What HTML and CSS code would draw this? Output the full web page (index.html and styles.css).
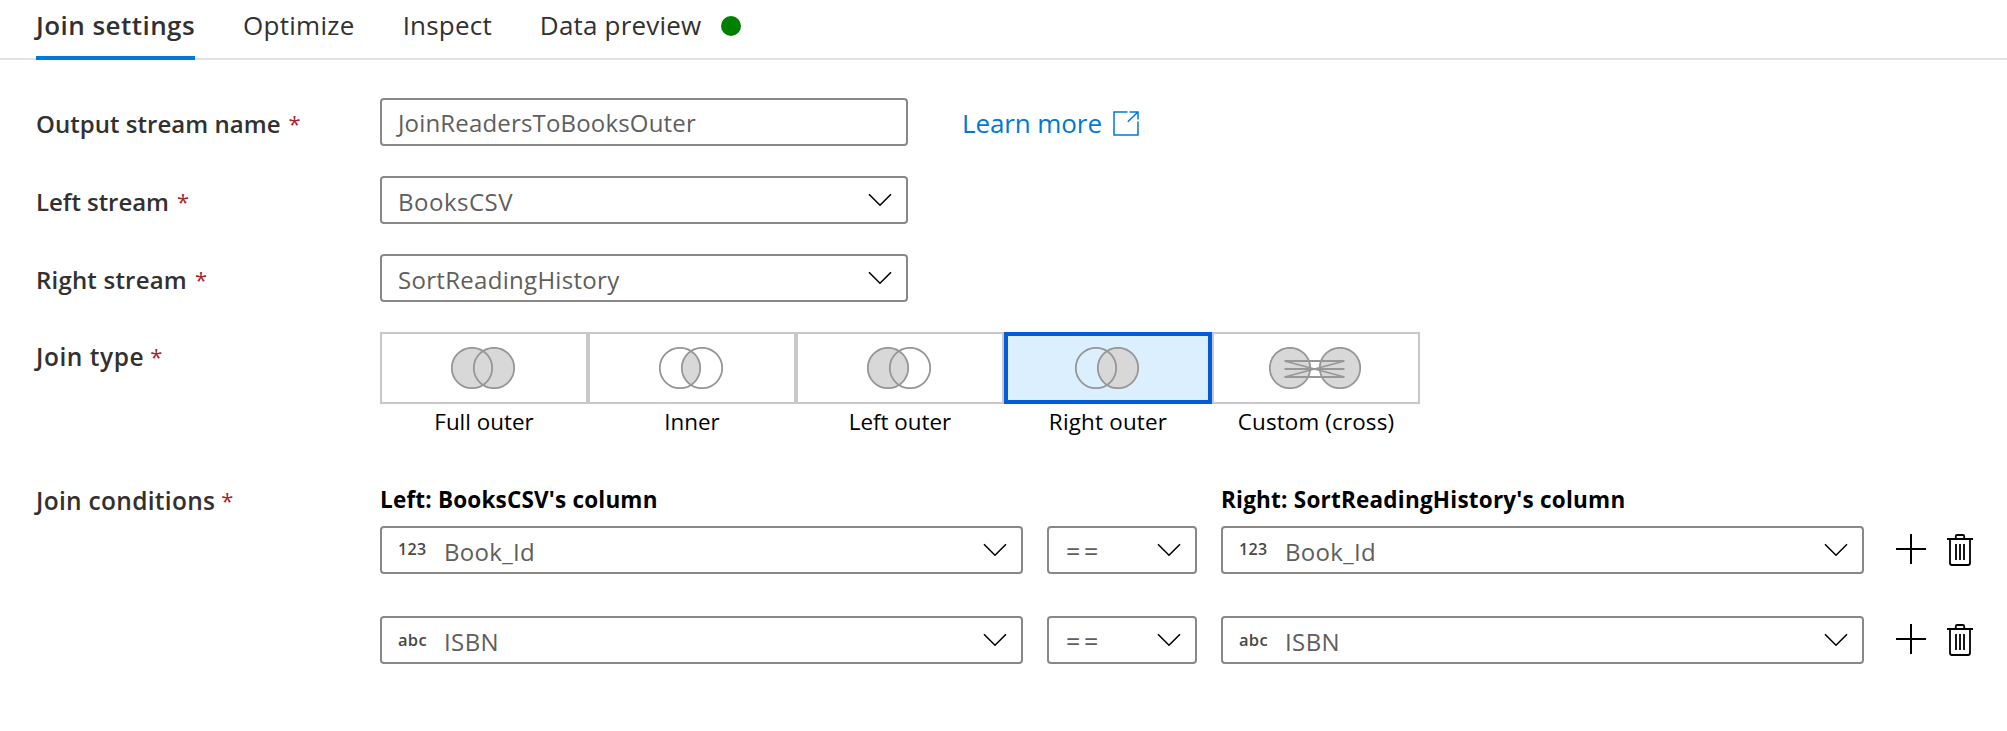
FILE: index.html
```html
<!DOCTYPE html>
<html lang="en">
<head>
<meta charset="utf-8">
<title>Join settings</title>
<link rel="stylesheet" href="styles.css">
</head>
<body>
<svg class="defs" width="0" height="0">
  <symbol id="chevron" viewBox="0 0 24 14"><path d="M1 1.2 12 12.2 23 1.2" fill="none" stroke="#000" stroke-width="1.6"/></symbol>
  <symbol id="plus" viewBox="0 0 30 30"><path d="M0 15H30M15 0V30" fill="none" stroke="#000" stroke-width="2"/></symbol>
  <symbol id="trash" viewBox="0 0 26 32"><path d="M0 5H26M3 5V29Q3 31 5 31H21Q23 31 23 29V5M8.800 5V2.200Q8.800 1 10 1H16Q17.200 1 17.200 2.200V5M9 10V26M13 10V26M17 10V26" fill="none" stroke="#000" stroke-width="1.8"/></symbol>
</svg>
<nav class="tabs">
  <a class="tab tab-active"><span class="t-join">Join settings</span></a>
  <a class="tab"><span class="t-opt">Optimize</span></a>
  <a class="tab"><span class="t-ins">Inspect</span></a>
  <a class="tab"><span class="t-data">Data preview</span><i class="status-dot"></i></a>
</nav>
<main class="form">
  <div class="row">
    <label class="label"><span class="l-out">Output stream name</span><b class="req">*</b></label>
    <div class="field field-input"><span class="value v-out">JoinReadersToBooksOuter</span></div>
    <a class="learn"><span class="learn-text">Learn more</span>
      <svg width="26" height="26" viewBox="0 0 26 26" fill="none" stroke="#0078d4" stroke-width="1.5"><path d="M14.500 1H1V24H25V10.500M16.500 1H25V8.500M25 1 14.800 10.800"/></svg>
    </a>
  </div>
  <div class="row">
    <label class="label"><span class="l-left">Left stream</span><b class="req">*</b></label>
    <div class="field"><span class="value v-books">BooksCSV</span><svg class="chev"><use href="#chevron"/></svg></div>
  </div>
  <div class="row">
    <label class="label"><span class="l-right">Right stream</span><b class="req">*</b></label>
    <div class="field"><span class="value v-sort">SortReadingHistory</span><svg class="chev"><use href="#chevron"/></svg></div>
  </div>
  <div class="row">
    <label class="label label-group"><span class="l-type">Join type</span><b class="req">*</b></label>
    <div class="types">
      <div class="type">
        <div class="type-box"><svg class="venn" width="66" height="42"><g stroke="none" fill="#d8d8d8"><circle cx="21" cy="21" r="20"/><circle cx="43" cy="21" r="20"/></g><circle cx="21" cy="21" r="20.200"/><circle cx="43" cy="21" r="20.200"/></svg></div>
        <span class="type-name n-full">Full outer</span>
      </div>
      <div class="type">
        <div class="type-box"><svg class="venn" width="66" height="42"><path stroke="none" fill="#d8d8d8" d="M32 4.060A20.200 20.200 0 0 1 32 37.940A20.200 20.200 0 0 1 32 4.060Z"/><circle cx="21" cy="21" r="20.200"/><circle cx="43" cy="21" r="20.200"/></svg></div>
        <span class="type-name n-inner">Inner</span>
      </div>
      <div class="type">
        <div class="type-box"><svg class="venn" width="66" height="42"><circle cx="21" cy="21" r="20.200" fill="#d8d8d8"/><circle cx="43" cy="21" r="20.200"/></svg></div>
        <span class="type-name n-left">Left outer</span>
      </div>
      <div class="type">
        <div class="type-box type-selected"><svg class="venn" width="66" height="42"><circle cx="43" cy="21" r="20.200" fill="#d8d8d8"/><circle cx="21" cy="21" r="20.200"/></svg></div>
        <span class="type-name n-right">Right outer</span>
      </div>
      <div class="type">
        <div class="type-box"><svg class="venn" width="94" height="42"><circle cx="21" cy="21" r="20.200" fill="#d8d8d8"/><circle cx="71" cy="21" r="20.200" fill="#d8d8d8"/><path d="M15.500 14H75.500M15.500 22H75.500M15.500 30H75.500M15.500 14 75.500 30M15.500 30 75.500 14"/></svg></div>
        <span class="type-name n-cross">Custom (cross)</span>
      </div>
    </div>
  </div>
  <div class="row">
    <label class="label label-group label-conditions"><span class="l-cond">Join conditions</span><b class="req">*</b></label>
    <div class="conditions">
      <div class="heading"><span class="h-left">Left: BooksCSV's column</span></div>
      <div class="heading heading-right"><span class="h-right">Right: SortReadingHistory's column</span></div>
      <div class="field"><span class="kind k-num">123</span><span class="value v-id">Book_Id</span><svg class="chev"><use href="#chevron"/></svg></div>
      <div class="field field-op"><span class="value v-eq">==</span><svg class="chev"><use href="#chevron"/></svg></div>
      <div class="field"><span class="kind k-num">123</span><span class="value v-id">Book_Id</span><svg class="chev"><use href="#chevron"/></svg></div>
      <div class="actions"><svg class="plus"><use href="#plus"/></svg><svg class="trash"><use href="#trash"/></svg></div>
      <div class="field second"><span class="kind k-abc">abc</span><span class="value v-isbn">ISBN</span><svg class="chev"><use href="#chevron"/></svg></div>
      <div class="field field-op second"><span class="value v-eq">==</span><svg class="chev"><use href="#chevron"/></svg></div>
      <div class="field second"><span class="kind k-abc">abc</span><span class="value v-isbn">ISBN</span><svg class="chev"><use href="#chevron"/></svg></div>
      <div class="actions second"><svg class="plus"><use href="#plus"/></svg><svg class="trash"><use href="#trash"/></svg></div>
    </div>
  </div>
</main>
</body>
</html>
```
FILE: styles.css
```css
* { box-sizing: border-box; }
body { margin: 0; background: #fff; color: #323130; font-family: "Open Sans", sans-serif; }
span { white-space: nowrap; }
svg { display: block; flex: none; }
.defs { position: absolute; }

/* Tabs */
.tabs { display: flex; gap: 48px; height: 60px; padding-left: 36px; border-bottom: 2px solid #e1e1e1; font-size: 26px; line-height: 50px; }
.tab { display: flex; height: 60px; }
.tab-active { width: 159px; font-weight: 600; border-bottom: 4px solid #0078d7; }
.t-join { letter-spacing: 0.45px; }
.t-opt { letter-spacing: 0.28px; }
.t-ins { letter-spacing: 0.2px; }
.t-data { letter-spacing: 0.19px; }
.status-dot { width: 20px; height: 20px; margin: 16px 0 0 20px; border-radius: 50%; background: #008000; }

/* Form rows */
.form { display: flex; flex-direction: column; gap: 30px; padding: 38px 0 0 36px; }
.row { display: flex; align-items: flex-start; }
.label { display: flex; width: 344px; height: 48px; font-size: 24px; line-height: 52px; font-weight: 600; }
.label-group { font-size: 24.5px; line-height: 49px; }
.label-conditions { margin-top: 6px; }
.req { margin-left: 8px; color: #a4262c; font-size: 22px; font-weight: 400; line-height: 51px; }
.label-group .req { margin-left: 6px; line-height: 48px; }
.l-out { letter-spacing: 0.04px; }
.l-left { letter-spacing: -0.05px; }
.l-right { letter-spacing: 0.2px; }
.l-type { letter-spacing: 0.55px; }
.l-cond { letter-spacing: 0.3px; }

.field { display: flex; align-items: center; width: 528px; height: 48px; padding: 2px 14px 0 16px; border: 2px solid #8a8886; border-radius: 4px; color: #605e5c; font-size: 24px; }
.field-input { padding-top: 0; }
.v-out { letter-spacing: 0.17px; }
.v-books { letter-spacing: 0.5px; }
.v-sort { letter-spacing: 0.3px; }
.v-id { letter-spacing: 0.3px; }
.v-isbn { letter-spacing: 0.4px; }
.v-eq { margin-left: 1px; font-size: 25px; letter-spacing: 3.6px; }
.chev { width: 24px; height: 14px; margin: -2px 0 0 auto; }

.learn { display: flex; gap: 11px; height: 48px; margin-left: 54px; color: #0078d4; font-size: 26px; line-height: 50px; letter-spacing: -0.1px; }
.learn svg { margin-top: 13px; }

/* Join type picker */
.types { display: flex; }
.type { display: flex; flex-direction: column; align-items: center; width: 208px; }
.type-box { display: flex; align-items: center; justify-content: center; width: 208px; height: 72px; border: 2px solid #c8c8c8; }
.type-selected { border: 4px solid #015cda; background: #dceffe; }
.venn { fill: none; stroke: #979797; stroke-width: 1.8; }
.type-name { height: 36px; color: #000; font-size: 22.4px; line-height: 36px; }
.n-right { letter-spacing: 0.2px; }
.n-cross { letter-spacing: 0.15px; }

/* Join conditions */
.conditions { display: grid; grid-template-columns: 643px 150px 643px auto; column-gap: 24px; }
.heading { height: 56px; color: #000; font-weight: 700; font-size: 22.5px; line-height: 60px; }
.heading-right { grid-column: 3 / 5; }
.h-left { letter-spacing: 0.19px; }
.h-right { letter-spacing: 0.22px; }
.conditions .field { width: auto; }
.kind { width: 46px; margin-top: -4px; color: #494847; font-size: 16px; font-weight: 600; letter-spacing: 0.3px; }
.k-abc { font-size: 16.5px; }
.actions { display: flex; gap: 21px; margin-left: 8px; align-items: center; }
.plus { width: 30px; height: 30px; margin-top: -2px; }
.trash { width: 26px; height: 32px; }
.second { margin-top: 42px; }
```
